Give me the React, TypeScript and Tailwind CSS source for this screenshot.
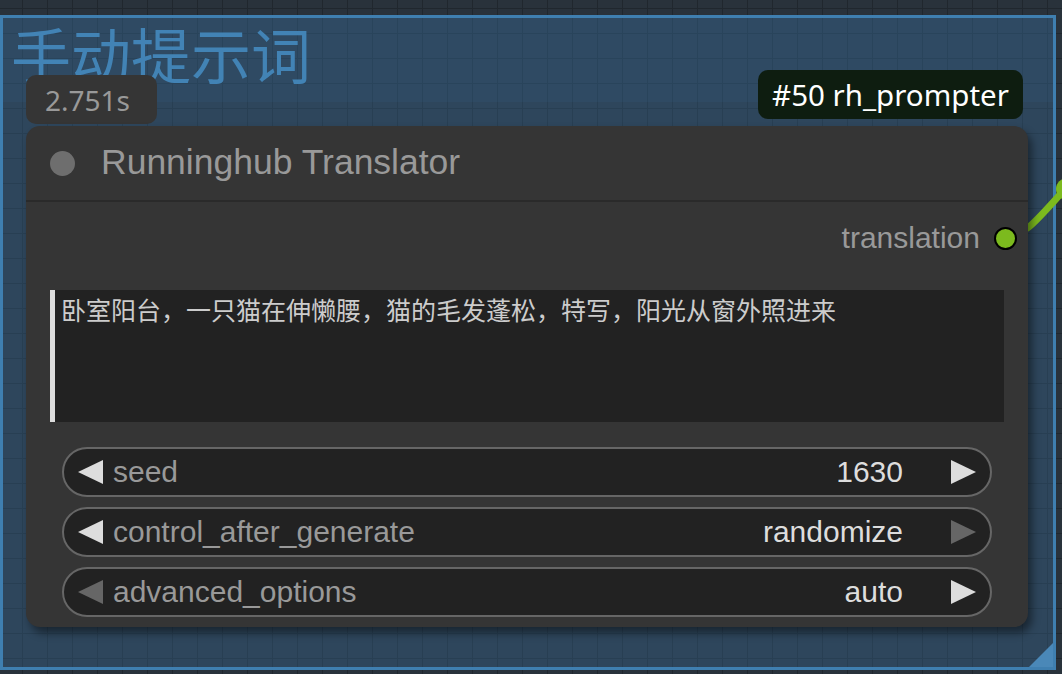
import React from 'react';

const ui = "font-['Liberation_Sans',Arial,sans-serif]";

function Arrow({ dir, dim }: { dir: 'l' | 'r'; dim?: boolean }) {
    return (
        <svg width="25" height="24" viewBox="0 0 25 24" className="shrink-0">
            <polygon points={dir === 'l' ? '25,0 0,12 25,24' : '0,0 25,12 0,24'} fill={dim ? '#666666' : '#dddddd'} />
        </svg>
    );
}

function Widget({ label, value, leftDim, rightDim }: { label: string; value: string; leftDim?: boolean; rightDim?: boolean }) {
    return (
        <div className="flex items-center h-[50px] rounded-full border-2 border-[#666] bg-[#222] pl-[14px] pr-[14px]">
            <Arrow dir="l" dim={leftDim} />
            <span className="ml-[10px] text-[30px] leading-none text-[#999]">{label}</span>
            <span className="ml-auto text-[30px] leading-none text-[#ddd]">{value}</span>
            <span className="ml-[48px] flex">
                <Arrow dir="r" dim={rightDim} />
            </span>
        </div>
    );
}

export default function App() {
    return (
        <div className={`relative w-[1062px] h-[674px] overflow-hidden bg-[#29323b] bg-[linear-gradient(to_right,#20272e_1px,transparent_1px),linear-gradient(to_bottom,#20272e_1px,transparent_1px)] bg-size-[25px_25px] bg-position-[22px_8px] ${ui}`}>
            {/* group */}
            <div className="absolute left-0 top-[15px] w-[1056px] h-[655px] border-[3px] border-[#3f7fb0] bg-[#3a78aa]/30 flex flex-col">
                <div className="h-[84px] bg-[#3a78aa]/10 pl-[8px]">
                    <span className="text-[60px] leading-[70px] text-[#4283b5] font-['Noto_Sans_CJK_SC',sans-serif]">手动提示词</span>
                </div>
                <div className="ml-auto mt-auto w-0 h-0 border-l-[24px] border-l-transparent border-b-[24px] border-b-[#4a88b8]" />
            </div>

            {/* link */}
            <svg className="absolute left-0 top-0" width="1062" height="674">
                <path d="M1006 236 C1025 236 1035 222 1066 188" stroke="#7cba1e" strokeWidth="7" fill="none" />
                <circle cx="1067" cy="189" r="11" fill="#7cba1e" />
            </svg>

            {/* timing badge */}
            <div className="absolute left-[26px] top-[75px] w-[131px] h-[49px] rounded-[10px] bg-[#353535] flex items-center pl-[19px]">
                <span className="text-[28px] leading-none text-[#999] font-['Noto_Sans',sans-serif]">2.751s</span>
            </div>

            {/* node id badge */}
            <div className="absolute left-[758px] top-[70px] w-[265px] h-[49px] rounded-[10px] bg-[#0e1d10] flex items-center justify-center">
                <span className="text-[29.5px] leading-none text-white font-['Noto_Sans',sans-serif]">#50 rh_prompter</span>
            </div>

            {/* node */}
            <div className="absolute left-[26px] top-[126px] w-[1002px] h-[501px] rounded-[14px] bg-[#353535] shadow-[4px_6px_8px_rgba(0,0,0,0.45)] flex flex-col">
                <div className="h-[76px] flex items-center pl-[24px] border-b-2 border-[#2a2a2a]">
                    <div className="w-[25px] h-[25px] rounded-full bg-[#6e6e6e]" />
                    <span className="ml-[26px] text-[35.5px] leading-none text-[#999]">Runninghub Translator</span>
                </div>
                <div className="flex flex-col">
                    <div className="mt-[16px] h-[40px] flex items-center justify-end pr-[11px]">
                        <span className="text-[30px] leading-none text-[#999]">translation</span>
                        <div className="ml-[14px] w-[23px] h-[23px] rounded-full bg-[#7cba1e] border-2 border-black" />
                    </div>
                    <div className="mt-[32px] mx-[24px] h-[132px] bg-[#222] border-l-[5px] border-[#ddd] pl-[6px] pt-[2px]">
                        <span className="text-[25px] leading-[34px] text-[#ccc] font-['Noto_Sans_CJK_SC',serif]">卧室阳台，一只猫在伸懒腰，猫的毛发蓬松，特写，阳光从窗外照进来</span>
                    </div>
                    <div className="mt-[25px] mx-[36px] flex flex-col gap-[10px]">
                        <Widget label="seed" value="1630" />
                        <Widget label="control_after_generate" value="randomize" rightDim />
                        <Widget label="advanced_options" value="auto" leftDim />
                    </div>
                </div>
            </div>
        </div>
    );
}
